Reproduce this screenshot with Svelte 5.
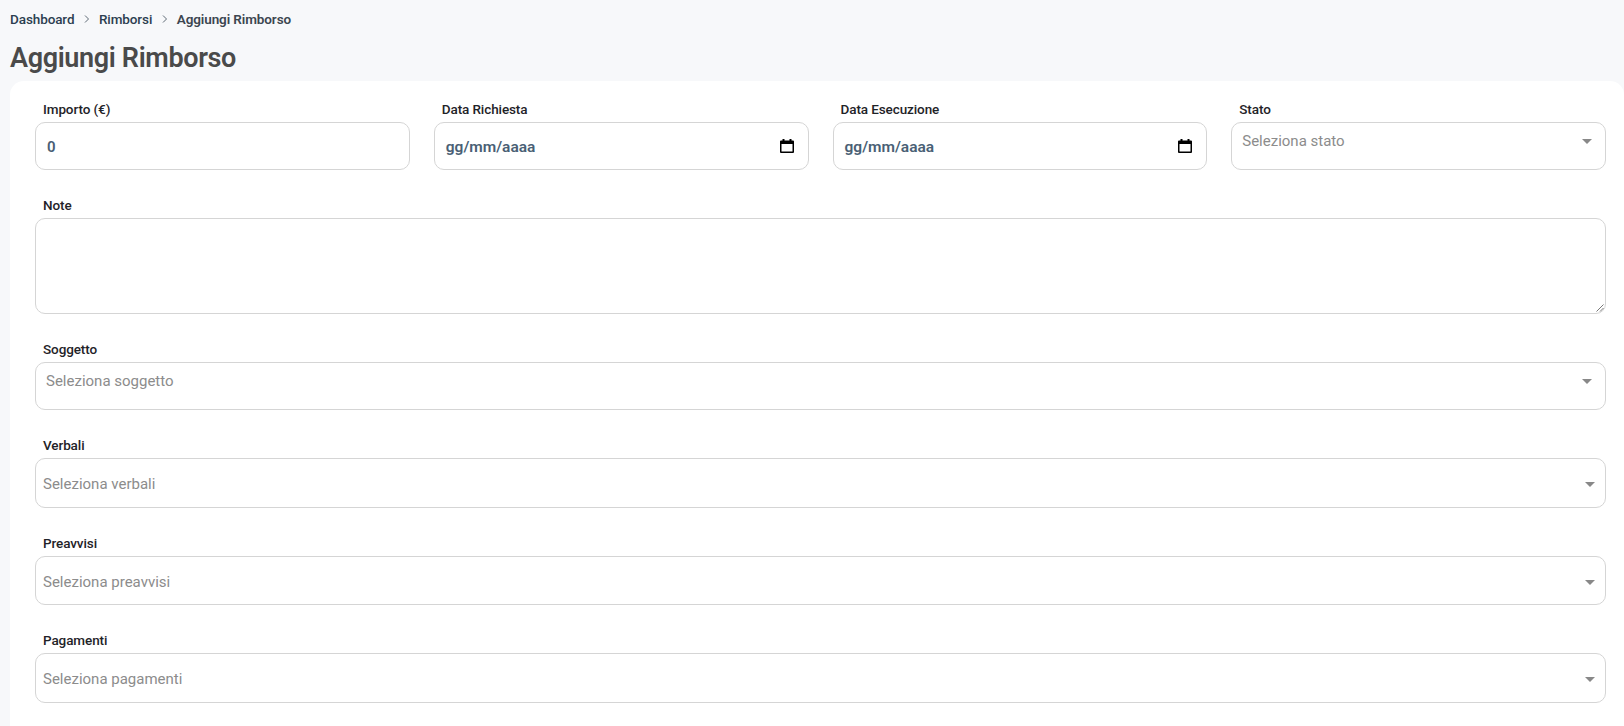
<script>
  const topFields = [
    { label: 'Importo (€)', value: '0', kind: 'number' },
    { label: 'Data Richiesta', value: 'gg/mm/aaaa', kind: 'date' },
    { label: 'Data Esecuzione', value: 'gg/mm/aaaa', kind: 'date' }
  ];

  const multiSelects = ['verbali', 'preavvisi', 'pagamenti'];

  function title(name) {
    return name.charAt(0).toUpperCase() + name.slice(1);
  }
</script>

<div class="page">
  <nav class="breadcrumb">
    <span class="crumb">Dashboard</span>
    <svg class="sep" viewBox="0 0 8 10" aria-hidden="true"><path d="M2 1.500 5.500 5 2 8.500" /></svg>
    <span class="crumb">Rimborsi</span>
    <svg class="sep" viewBox="0 0 8 10" aria-hidden="true"><path d="M2 1.500 5.500 5 2 8.500" /></svg>
    <span class="crumb current">Aggiungi Rimborso</span>
  </nav>

  <h1>Aggiungi Rimborso</h1>

  <form class="card">
    <div class="row">
      {#each topFields as field}
        <div class="field">
          <span class="label">{field.label}</span>
          <div class="control input" class:date={field.kind === 'date'}>
            <span class="value">{field.value}</span>
            {#if field.kind === 'date'}
              <svg class="calendar" viewBox="0 0 16 16" aria-hidden="true">
                <path d="M3.500 1h2v1.500h5V1h2v1.500H14a1 1 0 0 1 1 1V14a1 1 0 0 1-1 1H2a1 1 0 0 1-1-1V3.500a1 1 0 0 1 1-1h1.500zM2.500 6v7.500h11V6z" />
              </svg>
            {/if}
          </div>
        </div>
      {/each}
      <div class="field">
        <span class="label">Stato</span>
        <div class="control select">
          <span class="placeholder">Seleziona stato</span>
          <span class="caret"></span>
        </div>
      </div>
    </div>

    <div class="field">
      <span class="label">Note</span>
      <div class="control textarea">
        <svg class="grip" viewBox="0 0 8 8" aria-hidden="true"><path d="M7.500 .5 .5 7.500M7.500 4 4 7.500" /></svg>
      </div>
    </div>

    <div class="field">
      <span class="label">Soggetto</span>
      <div class="control select">
        <span class="placeholder">Seleziona soggetto</span>
        <span class="caret"></span>
      </div>
    </div>

    {#each multiSelects as name}
      <div class="field">
        <span class="label">{title(name)}</span>
        <div class="control multi">
          <span class="placeholder">Seleziona {name}</span>
          <span class="caret"></span>
        </div>
      </div>
    {/each}
  </form>
</div>

<style>
  :global(body) {
    background: #f7f8fa;
    overflow: hidden;
  }

  .page {
    display: flex;
    flex-direction: column;
    box-sizing: border-box;
    height: 726px;
    overflow: hidden;
    font-family: Roboto, "Noto Sans", sans-serif;
    padding-left: 10px;
  }

  .breadcrumb {
    display: flex;
    align-items: center;
    height: 38px;
    font-size: 13.5px;
    font-weight: 500;
    letter-spacing: -0.1px;
    color: #2c3e50;
  }

  .current {
    font-weight: 600;
    color: #3c4650;
  }

  .sep {
    width: 8px;
    height: 10px;
    margin: 0 8px 0 8.500px;
    fill: none;
    stroke: #5f6b76;
    stroke-width: 1;
  }

  h1 {
    margin: 0;
    height: 43px;
    font-size: 27px;
    line-height: 40px;
    font-weight: 600;
    letter-spacing: -0.35px;
    color: #4a4a4a;
  }

  .card {
    flex: 1;
    display: flex;
    flex-direction: column;
    gap: 26.2px;
    padding: 19px 18px 0 25px;
    background: #fff;
    border-radius: 14px 14px 0 0;
  }

  .row {
    display: grid;
    grid-template-columns: repeat(4, 1fr);
    gap: 24px;
  }

  .field {
    display: flex;
    flex-direction: column;
    min-width: 0;
  }

  .label {
    height: 22px;
    padding-left: 8px;
    font-size: 13.5px;
    line-height: 18px;
    font-weight: 500;
    letter-spacing: -0.1px;
    color: #1f2328;
  }

  .control {
    position: relative;
    display: flex;
    box-sizing: border-box;
    height: 48px;
    border: 1px solid #d5d5d5;
    border-radius: 10px;
    background: #fff;
  }

  .input {
    align-items: center;
    justify-content: space-between;
    padding: 1px 13px 0 11px;
    font-size: 15px;
    font-weight: 600;
    color: #4a5f75;
  }

  .date {
    font-size: 15.500px;
  }

  .calendar {
    width: 16px;
    height: 16px;
    margin-top: -1px;
    fill: #000;
    fill-rule: evenodd;
  }

  .textarea {
    height: 95.500px;
  }

  .grip {
    position: absolute;
    right: 1px;
    bottom: 1px;
    width: 8px;
    height: 8px;
    fill: none;
    stroke: #555;
    stroke-width: .8;
  }

  .select {
    padding: 7px 10px;
    align-items: flex-start;
  }

  .multi {
    height: 49.500px;
    padding: 2px 7px 0;
    align-items: center;
  }

  .placeholder {
    font-size: 15px;
    line-height: 22px;
    color: #8c8c8c;
  }

  .caret {
    position: absolute;
    right: 13px;
    top: 16px;
    border: 5.500px solid transparent;
    border-top: 5px solid #888;
    border-bottom: 0;
  }

  .multi .caret {
    top: 23px;
    right: 10px;
  }
</style>
